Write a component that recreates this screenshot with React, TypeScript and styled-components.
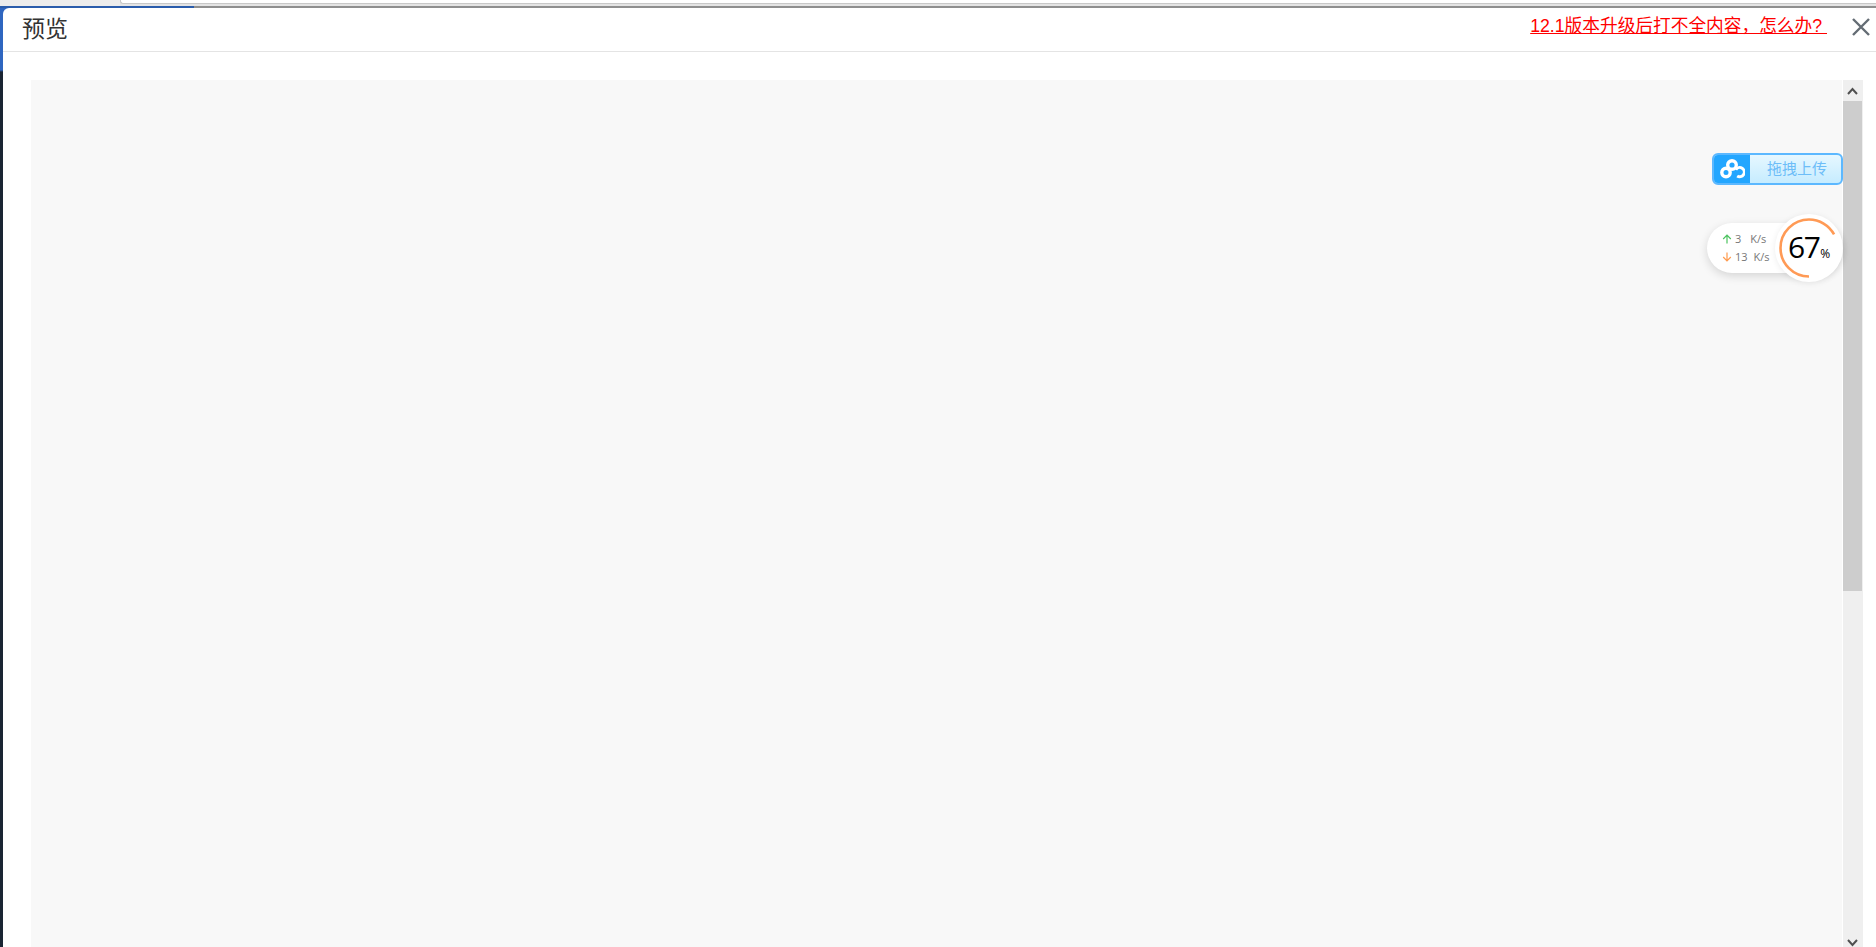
import React from "react";
import styled, { createGlobalStyle } from "styled-components";

const Global = createGlobalStyle`
  html, body { margin: 0; padding: 0; width: 100%; height: 100%; overflow: hidden; background: #fff; }
  #root { width: 100%; height: 100%; }
`;

const FONT = `"Liberation Sans", "Noto Sans CJK SC", sans-serif`;
const UI = `"Open Sans", "Noto Sans CJK SC", sans-serif`;

const Page = styled.div`
  width: 1876px;
  height: 947px;
  overflow: hidden;
  display: flex;
  flex-direction: column;
  background: #1a2533;
`;

const BrowserEdge = styled.div`
  height: 8px;
  flex: none;
  display: flex;
  flex-direction: column;
  background: #e4e4e4;
`;

const ChromeRow = styled.div`
  height: 6px;
  flex: none;
  display: flex;
  align-items: flex-start;
`;

const TabFiller = styled.div`
  width: 120px;
  height: 6px;
  flex: none;
  background: #ececec;
`;

const AddressField = styled.div`
  flex: 1;
  height: 3px;
  background: #fff;
  border-left: 1px solid #c8c8c8;
  border-bottom: 1px solid #c8c8c8;
  border-bottom-left-radius: 3px;
`;

const ChromeLine = styled.div`
  height: 2px;
  flex: none;
  background: #8f8f8f;
`;

const TabAccent = styled.div`
  width: 194px;
  height: 2px;
  background: #2a5cab;
`;

const Workspace = styled.div`
  flex: 1;
  min-height: 0;
  display: flex;
  background: linear-gradient(#2f66c0 0, #2f66c0 62px, #1a2533 64px);
`;

const Dialog = styled.div`
  margin-left: 3px;
  flex: 1;
  min-width: 0;
  background: #fff;
  border-top-left-radius: 6px;
  display: flex;
  flex-direction: column;
`;

const Header = styled.header`
  height: 44px;
  flex: none;
  box-sizing: border-box;
  border-bottom: 1px solid #e4e4e4;
  display: flex;
  align-items: flex-start;
  padding-left: 19px;
`;

const Title = styled.h1`
  margin: 6px 0 0;
  font: 400 23px/30px ${FONT};
  color: #333;
`;

const HelpLink = styled.a`
  margin: 8px 0 0 auto;
  font: 400 17.7px/20px ${FONT};
  color: #f00;
  text-decoration: underline;
  white-space: pre;
`;

const CloseButton = styled.button`
  width: 20px;
  height: 20px;
  margin: 9px 5px 0 24px;
  padding: 0;
  border: 0;
  background: none;
  display: flex;
  color: #646c74;
`;

const Body = styled.main`
  flex: 1;
  min-height: 0;
  padding: 28px 13px 0 28px;
  display: flex;
`;

const Preview = styled.section`
  flex: 1;
  min-width: 0;
  background: #f8f8f8;
  position: relative;
`;

const Track = styled.div`
  width: 20px;
  margin: 0 0 -6px 1px;
  flex: none;
  background: #efefef;
  display: flex;
  flex-direction: column;
`;

const ArrowButton = styled.div`
  height: 21px;
  width: 19px;
  flex: none;
  display: flex;
  align-items: center;
  justify-content: center;
  color: #505050;
`;

const Thumb = styled.div`
  height: 490px;
  flex: none;
  width: 19px;
  background: #cdcdcd;
`;

const Spacer = styled.div`
  flex: 1;
`;

const UploadBadge = styled.div`
  position: absolute;
  top: 73px;
  right: -1px;
  width: 131px;
  height: 32px;
  box-sizing: border-box;
  border: 2px solid #5cb8ff;
  border-radius: 6px;
  background: linear-gradient(#e6f7ff, #c6ecff);
  display: flex;
  overflow: hidden;
`;

const UploadIcon = styled.div`
  width: 36px;
  flex: none;
  background: #23a6ff;
  display: flex;
  align-items: center;
  justify-content: center;
`;

const UploadText = styled.span`
  flex: 1;
  text-align: center;
  padding-left: 3px;
  font: 400 15px/28px ${FONT};
  color: #6dbdf8;
`;

const SpeedPill = styled.div`
  position: absolute;
  top: 143px;
  right: 0;
  width: 135px;
  height: 50px;
  border-radius: 25px;
  background: #fff;
  box-shadow: 0 3px 10px rgba(0, 0, 0, 0.14);
  box-sizing: border-box;
  padding: 7px 0 0 15px;
  display: flex;
  flex-direction: column;
  gap: 1px;
`;

const SpeedRow = styled.div`
  display: flex;
  align-items: center;
  height: 17px;
  font: 400 11px/17px ${UI};
  color: #777;
  white-space: pre;
`;

const SpeedValue = styled.span`
  margin-left: 3px;
`;

const SpeedUnit = styled.span<{ $gap: number }>`
  margin-left: ${(p) => p.$gap}px;
`;

const Gauge = styled.div`
  position: absolute;
  top: 134px;
  right: -1px;
  width: 68px;
  height: 68px;
  border-radius: 50%;
  background: #fff;
  box-shadow: 0 1px 6px rgba(0, 0, 0, 0.08);
`;

const GaugeRing = styled.svg`
  display: block;
`;

const GaugeLabel = styled.div`
  position: absolute;
  inset: 0;
  display: flex;
  align-items: baseline;
  padding: 13px 0 0 13px;
  font: 400 30px/40px ${UI};
  letter-spacing: -1.5px;
  color: #000;
`;

const Percent = styled.span`
  font-size: 12px;
  letter-spacing: 0;
  margin-left: 1px;
`;

const Up = () => (
  <svg width="10" height="10" viewBox="0 0 10 10" fill="none" stroke="#4cc35f" strokeWidth="1.2">
    <path d="M5 9.5V1.2M1.2 5 5 1.2 8.8 5" />
  </svg>
);

const Down = () => (
  <svg width="10" height="10" viewBox="0 0 10 10" fill="none" stroke="#ff9a4d" strokeWidth="1.2">
    <path d="M5 .5v8.3M1.2 5 5 8.8 8.8 5" />
  </svg>
);

const CloudLogo = () => (
  <svg width="25" height="20" viewBox="0 0 25 20" fill="none" stroke="#fff">
    <circle cx="12" cy="6" r="4.3" strokeWidth="3.4" />
    <circle cx="6" cy="13.5" r="4.2" strokeWidth="3.4" />
    <path d="M15.8 10.6A4.6 4.6 0 1 1 17.2 17" strokeWidth="3" />
  </svg>
);

export default function App() {
  const r = 28.5;
  const c = 2 * Math.PI * r;
  return (
    <Page>
      <Global />
      <BrowserEdge>
        <ChromeRow>
          <TabFiller />
          <AddressField />
        </ChromeRow>
        <ChromeLine>
          <TabAccent />
        </ChromeLine>
      </BrowserEdge>
      <Workspace>
        <Dialog>
          <Header>
            <Title>预览</Title>
            <HelpLink>12.1版本升级后打不全内容，怎么办? </HelpLink>
            <CloseButton aria-label="关闭">
              <svg width="20" height="20" viewBox="0 0 20 20" stroke="currentColor" strokeWidth="2.4">
                <path d="M2 2l16 16M18 2 2 18" />
              </svg>
            </CloseButton>
          </Header>
          <Body>
            <Preview>
              <UploadBadge>
                <UploadIcon>
                  <CloudLogo />
                </UploadIcon>
                <UploadText>拖拽上传</UploadText>
              </UploadBadge>
              <SpeedPill>
                <SpeedRow>
                  <Up />
                  <SpeedValue>3</SpeedValue>
                  <SpeedUnit $gap={9}>K/s</SpeedUnit>
                </SpeedRow>
                <SpeedRow>
                  <Down />
                  <SpeedValue>13</SpeedValue>
                  <SpeedUnit $gap={6}>K/s</SpeedUnit>
                </SpeedRow>
              </SpeedPill>
              <Gauge>
                <GaugeRing width="68" height="68" viewBox="0 0 68 68">
                  <circle
                    cx="34"
                    cy="34"
                    r={r}
                    fill="none"
                    stroke="#ff9a55"
                    strokeWidth="2.6"
                    strokeDasharray={`${c * 0.67} ${c}`}
                    transform="rotate(90 34 34)"
                  />
                </GaugeRing>
                <GaugeLabel>
                  67<Percent>%</Percent>
                </GaugeLabel>
              </Gauge>
            </Preview>
            <Track>
              <ArrowButton>
                <svg width="11" height="8" viewBox="0 0 11 8" fill="none" stroke="currentColor" strokeWidth="2">
                  <path d="M1 7l4.5-5L10 7" />
                </svg>
              </ArrowButton>
              <Thumb />
              <Spacer />
              <ArrowButton>
                <svg width="11" height="8" viewBox="0 0 11 8" fill="none" stroke="currentColor" strokeWidth="2">
                  <path d="M1 1l4.5 5L10 1" />
                </svg>
              </ArrowButton>
            </Track>
          </Body>
        </Dialog>
      </Workspace>
    </Page>
  );
}
